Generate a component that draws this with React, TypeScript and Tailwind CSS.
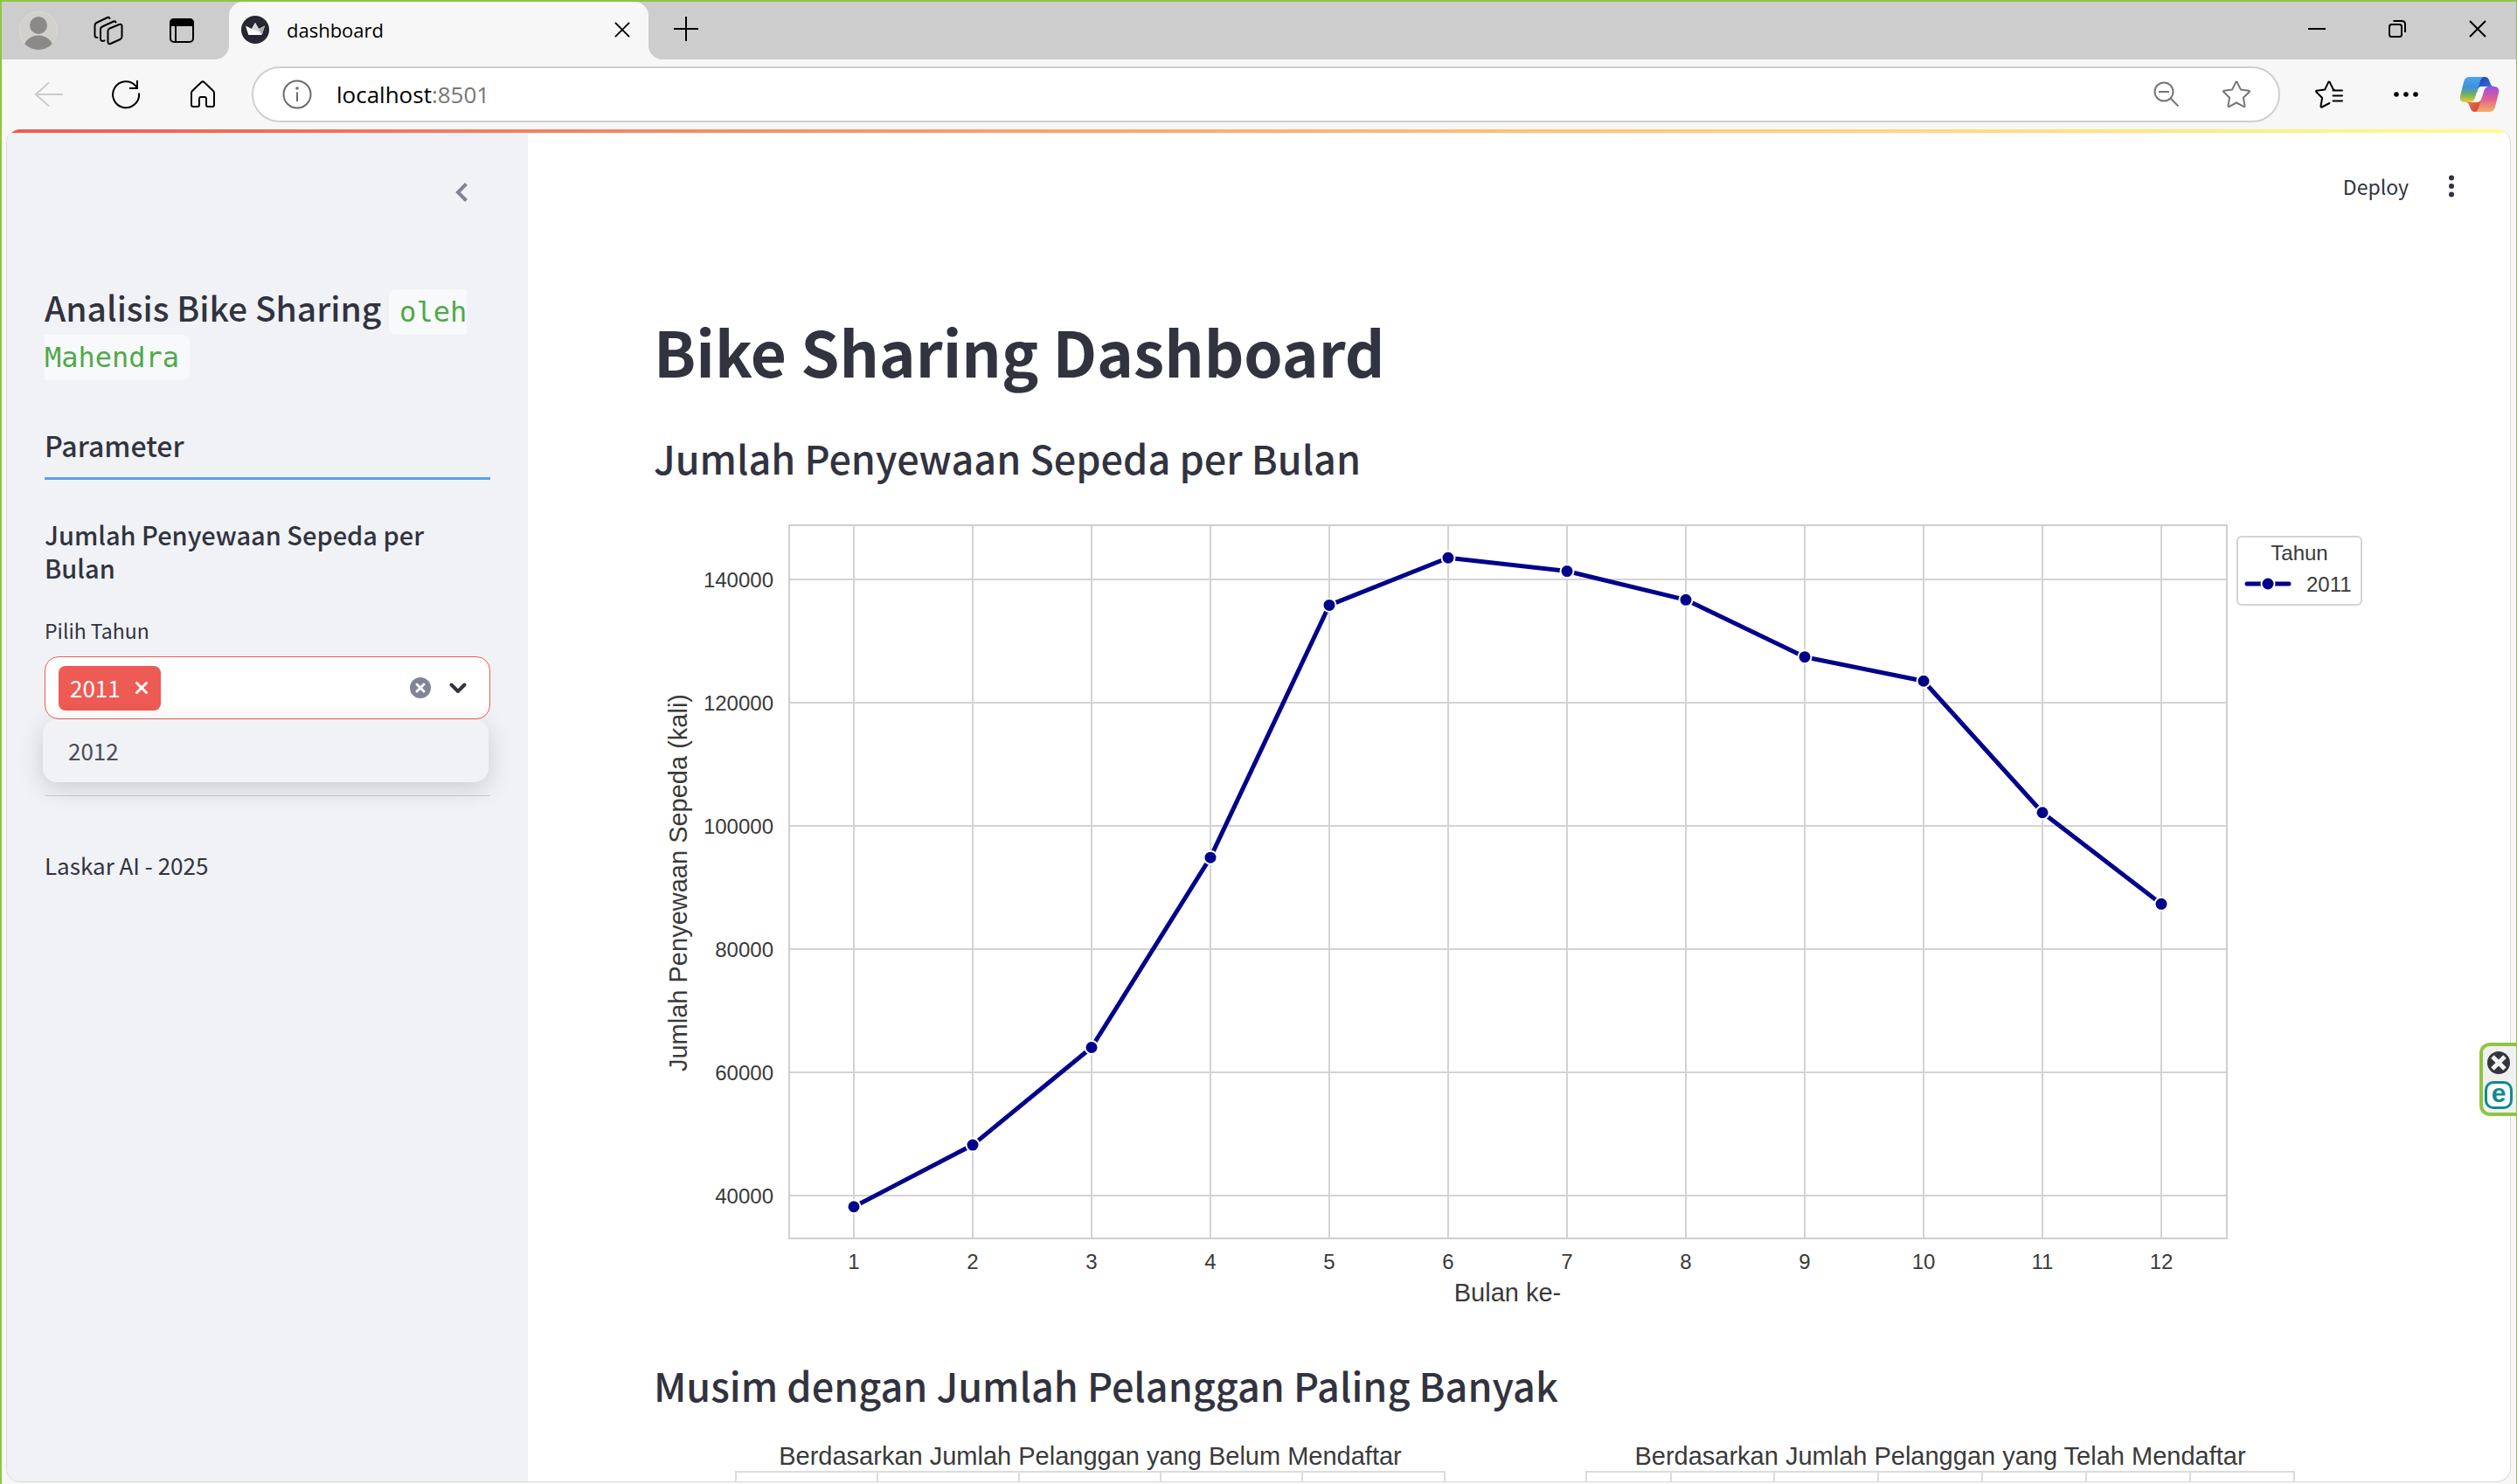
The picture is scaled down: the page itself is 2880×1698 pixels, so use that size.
const rentals = [38189, 48215, 64045, 94870, 135821, 143512, 141341, 136691, 127418, 123511, 102167, 87323];
const yTicks = [40000, 60000, 80000, 100000, 120000, 140000];

const monthX = (i: number) => 229 + i * 136;
const valueY = (v: number) => 778 - ((v - 40000) * 141) / 20000;

function MonthlyChart() {
  const points = rentals.map((v, i) => `${monthX(i)},${valueY(v)}`).join(" ");
  return (
    <svg viewBox="0 0 1980 915" role="img" aria-label="Jumlah Penyewaan Sepeda per Bulan" className="block h-auto w-full font-['Liberation_Sans',Arial,sans-serif]">
      <g stroke="#d3d3d3" strokeWidth="2" fill="none">
        {rentals.map((_, i) => (
          <line key={i} x1={monthX(i)} x2={monthX(i)} y1={11} y2={827} />
        ))}
        {yTicks.map((v) => (
          <line key={v} x1={155} x2={1800} y1={valueY(v)} y2={valueY(v)} />
        ))}
        <rect x="155" y="11" width="1645" height="816" stroke="#cfcfcf" />
      </g>
      <g fill="#3a3a3a" fontSize="24">
        {yTicks.map((v) => (
          <text key={v} x={137} y={valueY(v) + 9} textAnchor="end">{v}</text>
        ))}
        {rentals.map((_, i) => (
          <text key={i} x={monthX(i)} y={862} textAnchor="middle">{i + 1}</text>
        ))}
      </g>
      <g fill="#3a3a3a" fontSize="29" textAnchor="middle">
        <text x="977" y="899">Bulan ke-</text>
        <text x="38" y="420" transform="rotate(-90 38 420)">Jumlah Penyewaan Sepeda (kali)</text>
      </g>
      <polyline points={points} fill="none" stroke="#00008b" strokeWidth="5" strokeLinejoin="round" />
      <g fill="#00008b" stroke="#fff" strokeWidth="2">
        {rentals.map((v, i) => (
          <circle key={i} cx={monthX(i)} cy={valueY(v)} r="7.5" />
        ))}
      </g>
      <rect x="1812" y="24" width="142" height="78" rx="5" fill="#fff" stroke="#d3d3d3" strokeWidth="2" />
      <g fill="#3a3a3a" fontSize="24">
        <text x="1883" y="51" textAnchor="middle">Tahun</text>
        <text x="1891" y="87">2011</text>
      </g>
      <line x1="1823" x2="1871" y1="78" y2="78" stroke="#00008b" strokeWidth="5" strokeLinecap="round" />
      <circle cx="1847" cy="78" r="7.5" fill="#00008b" stroke="#fff" strokeWidth="2" />
    </svg>
  );
}

const seasonPanels = [
  { title: "Berdasarkan Jumlah Pelanggan yang Belum Mendaftar", left: 94, right: 905, lines: [256, 418, 580, 742] },
  { title: "Berdasarkan Jumlah Pelanggan yang Telah Mendaftar", left: 1067, right: 1877, lines: [1164, 1282, 1401, 1520, 1639, 1758] },
];

function SeasonCharts() {
  return (
    <svg viewBox="0 0 1980 600" role="img" aria-label="Musim dengan Jumlah Pelanggan Paling Banyak" className="block h-auto w-full font-['Liberation_Sans',Arial,sans-serif]">
      {seasonPanels.map((p) => (
        <g key={p.title}>
          <g stroke="#dcdcdc" strokeWidth="2" fill="none">
            {p.lines.map((x) => (
              <line key={x} x1={x} x2={x} y1={44} y2={520} />
            ))}
            <rect x={p.left} y={44} width={p.right - p.left} height={476} />
          </g>
          <text x={(p.left + p.right) / 2} y={36} textAnchor="middle" fontSize="29" fill="#3a3a3a">{p.title}</text>
        </g>
      ))}
    </svg>
  );
}

const AvatarIcon = () => (
  <svg width="44" height="44" viewBox="0 0 44 44">
    <defs>
      <clipPath id="avatar"><circle cx="22" cy="22" r="22" /></clipPath>
    </defs>
    <circle cx="22" cy="22" r="21.5" fill="#d2d0cc" stroke="#dedbd0" />
    <g clipPath="url(#avatar)" fill="#8b8a88">
      <circle cx="22" cy="16" r="10" />
      <ellipse cx="22" cy="43" rx="17" ry="15.5" />
    </g>
  </svg>
);

const WorkspacesIcon = () => (
  <svg width="34" height="34" viewBox="0 0 34 34" fill="none" stroke="#000" strokeWidth="2" strokeLinecap="round" strokeLinejoin="round">
    <path d="M16.500 17.500q0-2 2-3L29.500 10q3-1 3 2v12q0 2-2 3L19.500 32q-3 1-3-2Z" />
    <path d="M12.500 28.500c-3 1-4.500 0-4.500-2V15.500q0-2 2-3L23 6.500q2-.5 2.500 1" />
    <path d="M4.500 25C2.500 25 1.500 24.500 1.500 22.500V11q0-2 2-3L16 2q2-.5 2.500 1" />
  </svg>
);

const TabMenuIcon = () => (
  <svg width="30" height="30" viewBox="0 0 30 30" fill="none" stroke="#000" strokeWidth="2">
    <rect x="2" y="2" width="26" height="26" rx="4" />
    <path d="M2 9V6a4 4 0 0 1 4-4h18a4 4 0 0 1 4 4v3Z" fill="#000" />
    <path d="M8 9v19" />
  </svg>
);

const Favicon = () => (
  <svg width="32" height="32" viewBox="0 0 32 32">
    <circle cx="16" cy="16" r="16" fill="#262730" />
    <path d="M5 11.500 12 15l4-7 4 7 7-3.500-3.300 10.500H8.300Z" fill="#fff" />
    <path d="m16 8 4 7 7-3.500L23.700 22Z" fill="#a9a9ad" />
    <path d="m16 8 4 7 1.500 4L12 15Z" fill="#d4d4d8" />
  </svg>
);

const CloseIcon = ({ size = 20 }: { size?: number }) => (
  <svg width={size} height={size} viewBox="0 0 20 20" stroke="#000" strokeWidth="2"><path d="m1 1 18 18M19 1 1 19" /></svg>
);

const StarIcon = () => (
  <svg width="34" height="34" viewBox="0 0 34 34" fill="none" stroke="#767676" strokeWidth="2" strokeLinejoin="round">
    <path d="M16.200 3.100q.8-1.400 1.600 0l4 8.300 9.300 1.400q1.500.3.500 1.500l-6.700 6.400 1.600 9.200q.1 1.600-1.300 1L17 26.500l-8.200 4.400q-1.400.6-1.300-1l1.600-9.200-6.700-6.400q-1-1.200.5-1.500l9.300-1.400Z" />
  </svg>
);

const FavoritesIcon = () => (
  <svg width="34" height="34" viewBox="0 0 34 34" fill="none" stroke="#000" strokeWidth="2" strokeLinejoin="round" strokeLinecap="round">
    <path d="M17.500 27 8.800 31.500q-1.400.6-1.300-1l1.600-9.500-6.700-6.700q-1-1.200.5-1.500l9.300-1.400 4-8.300q.8-1.400 1.600 0l4 8.300 1 .4M21.500 12.500H32M21.500 18.500H32M21.500 24.500H32" />
  </svg>
);

const CopilotIcon = () => (
  <svg width="46" height="42" viewBox="0 0 46 42">
    <defs>
      <linearGradient id="cp-left" x1="0" y1="0" x2="0" y2="1">
        <stop offset="0" stopColor="#49a8ee" /><stop offset=".4" stopColor="#3f8fdc" /><stop offset=".7" stopColor="#6db35c" /><stop offset="1" stopColor="#f5c842" />
      </linearGradient>
      <linearGradient id="cp-right" x1="0" y1="0" x2="0" y2="1">
        <stop offset="0" stopColor="#9a50e2" /><stop offset=".5" stopColor="#e0608f" /><stop offset="1" stopColor="#f2b264" />
      </linearGradient>
      <linearGradient id="cp-top" x1="0" y1="0" x2="1" y2="1">
        <stop offset="0" stopColor="#1f36b8" /><stop offset="1" stopColor="#3a8de0" />
      </linearGradient>
      <linearGradient id="cp-bottom" x1="0" y1="0" x2="1" y2="1">
        <stop offset="0" stopColor="#f08a4c" /><stop offset="1" stopColor="#c83c35" />
      </linearGradient>
    </defs>
    <path d="M20 1h9c4 0 5 3 6 6s2 5 5 5H28L20 20Z" fill="url(#cp-top)" />
    <path d="M26 41h-8c-4 0-5-3-6-6s-2-5-5-5h12l8-8Z" fill="url(#cp-bottom)" />
    <path d="M12 1h17c-3 0-4 2-5 5l-6 19c-1 3-3 5-6 5H6c-4 0-6-3-5-7L5 7c1-4 3-6 7-6Z" fill="url(#cp-left)" />
    <path d="M34 41H17c3 0 4-2 5-5l6-19c1-3 3-5 6-5h6c4 0 6 3 5 7l-4 16c-1 4-3 6-7 6Z" fill="url(#cp-right)" />
    <path d="M26 12h7c-3 0-4 2-5 5l-2 7c-1 4-3 6-6 6h-6c2-1 3-2 4-5l3-9c1-3 2-4 4-4Z" fill="#f7f7f7" />
  </svg>
);

function TabStrip() {
  return (
    <header className="flex h-[66px] shrink-0 bg-[#f7f7f7]">
      <div className="flex w-[260px] items-center rounded-br-2xl bg-[#cdcdcd]">
        <button aria-label="Profil" className="flex w-[84px] justify-center"><AvatarIcon /></button>
        <button aria-label="Ruang kerja" className="flex w-[76px] justify-center"><WorkspacesIcon /></button>
        <button aria-label="Menu tab" className="flex w-[92px] justify-center"><TabMenuIcon /></button>
      </div>
      <div className="w-[480px] bg-[linear-gradient(#cdcdcd_50%,#f7f7f7_50%)]">
        <div className="flex h-16 items-center gap-5 rounded-t-2xl bg-[#f7f7f7] px-3.5">
          <Favicon />
          <span className="flex-1 text-[22px] leading-8 text-black">dashboard</span>
          <button aria-label="Tutup tab" className="flex size-8 items-center justify-center"><CloseIcon size={18} /></button>
        </div>
      </div>
      <div className="flex flex-1 items-center rounded-bl-2xl bg-[#cdcdcd]">
        <button aria-label="Tab baru" className="flex w-[86px] justify-center pb-1">
          <svg width="28" height="28" viewBox="0 0 28 28" stroke="#000" strokeWidth="2"><path d="M14 0v28M0 14h28" /></svg>
        </button>
        <div className="flex-1" />
        <button aria-label="Perkecil" className="flex w-[92px] justify-center pr-1 pb-1">
          <svg width="20" height="20" viewBox="0 0 20 20" stroke="#000" strokeWidth="2"><path d="M0 10h20" /></svg>
        </button>
        <button aria-label="Pulihkan" className="flex w-[92px] justify-center pr-1 pb-1">
          <svg width="20" height="20" viewBox="0 0 20 20" fill="none" stroke="#000" strokeWidth="2"><rect x="1" y="5" width="14" height="14" rx="2.500" /><path d="M5.500 1H15q4 0 4 4v9" /></svg>
        </button>
        <button aria-label="Tutup" className="flex w-[88px] justify-center pb-1"><CloseIcon /></button>
      </div>
    </header>
  );
}

function Toolbar() {
  return (
    <nav className="flex h-20 shrink-0 items-center bg-[#f7f7f7] pr-0.5 pl-2.5">
      <button aria-label="Kembali" className="flex w-[88px] justify-center">
        <svg width="32" height="28" viewBox="0 0 32 28" fill="none" stroke="#cbcbcb" strokeWidth="2"><path d="M32 14H1M16 .5 1 14l15 13.500" /></svg>
      </button>
      <button aria-label="Muat ulang" className="flex w-[88px] justify-center">
        <svg width="34" height="34" viewBox="0 0 34 34" fill="none" stroke="#000" strokeWidth="2"><path d="M32 15.500A15 15 0 1 1 28.500 7.500l1 1.500M30 1v9h-9" /></svg>
      </button>
      <button aria-label="Beranda" className="flex w-[88px] justify-center">
        <svg width="30" height="32" viewBox="0 0 30 32" fill="none" stroke="#000" strokeWidth="2" strokeLinejoin="round"><path d="M2 14.500q0-1.500 1-2.500L13.500 2q1.500-1.300 3 0L27 12q1 1 1 2.500V28q0 2-2 2h-5q-2 0-2-2v-7q0-2-2-2h-4q-2 0-2 2v7q0 2-2 2H4q-2 0-2-2Z" /></svg>
      </button>
      <div className="ml-3 flex h-16 flex-1 items-center rounded-full border-2 border-[#cfcfcf] bg-white pr-[31px] pl-[33px]">
        <button aria-label="Info situs" className="mr-7">
          <svg width="34" height="34" viewBox="0 0 34 34" fill="none" stroke="#6b6b6b" strokeWidth="2"><circle cx="17" cy="17" r="15.500" /><path d="M17 14.500V25" /><circle cx="17" cy="10" r=".8" fill="#6b6b6b" /></svg>
        </button>
        <div role="textbox" aria-label="Bilah alamat" className="flex-1 text-[26px] leading-9 text-black">localhost<span className="text-[#767676]">:8501</span></div>
        <button aria-label="Zoom" className="mr-12">
          <svg width="30" height="30" viewBox="0 0 30 30" fill="none" stroke="#767676" strokeWidth="2"><circle cx="12" cy="12" r="10.500" /><path d="m19.500 19.500 9 9M6 12h12" /></svg>
        </button>
        <button aria-label="Tambah favorit"><StarIcon /></button>
      </div>
      <button aria-label="Favorit" className="ml-3 flex w-[88px] justify-center"><FavoritesIcon /></button>
      <button aria-label="Setelan" className="flex w-[88px] justify-center">
        <svg width="28" height="6" viewBox="0 0 28 6"><circle cx="3" cy="3" r="2.800" /><circle cx="14" cy="3" r="2.800" /><circle cx="25" cy="3" r="2.800" /></svg>
      </button>
      <button aria-label="Copilot" className="flex w-20 justify-center"><CopilotIcon /></button>
    </nav>
  );
}

function YearSelect() {
  return (
    <div>
      <label htmlFor="year" className="block text-[23px] leading-8">Pilih Tahun</label>
      <div className="relative mt-3.5">
        <div className="flex h-[72px] items-center rounded-2xl border border-[#ee5a54] bg-white pr-6 pl-[15px] text-[26px] leading-[46px]">
          <span className="flex h-[51px] items-center gap-4 rounded-lg bg-[#ee5a54] pr-3.5 pl-[13px] text-white">
            2011
            <button aria-label="Hapus 2011">
              <svg width="16" height="16" viewBox="0 0 16 16" stroke="#fff" strokeWidth="3" strokeLinecap="round"><path d="m2.500 2.500 11 11M13.500 2.500l-11 11" /></svg>
            </button>
          </span>
          <input id="year" role="combobox" aria-expanded="true" aria-controls="year-list" className="min-w-0 flex-1 bg-transparent outline-none" />
          <button aria-label="Hapus semua" className="mr-[19px]">
            <svg width="24" height="24" viewBox="0 0 24 24"><circle cx="12" cy="12" r="12" fill="#808495" /><path d="m8 8 8 8M16 8l-8 8" stroke="#fff" strokeWidth="3" strokeLinecap="round" /></svg>
          </button>
          <button aria-label="Buka pilihan">
            <svg width="24" height="24" viewBox="0 0 24 24" fill="none" stroke="#31333f" strokeWidth="4" strokeLinecap="round" strokeLinejoin="round"><path d="m4.500 8.500 7.500 7.500 7.500-7.500" /></svg>
          </button>
        </div>
        <ul id="year-list" role="listbox" className="absolute top-full right-0.5 -left-0.5 rounded-2xl bg-[#f0f2f6] shadow-[0_7px_29px_rgba(0,0,0,0.16)]">
          <li role="option" aria-selected="false" className="px-[29px] py-[13px] text-[26px] leading-[46px] text-[#4a4c57]">2012</li>
        </ul>
      </div>
    </div>
  );
}

function Sidebar() {
  return (
    <aside className="w-[596px] shrink-0 bg-[#f0f2f6] px-[43px]">
      <div className="flex h-[136px] items-center justify-end pr-[21px]">
        <button aria-label="Tutup sidebar" className="p-1">
          <svg width="16" height="22" viewBox="0 0 16 22" fill="none" stroke="#808495" strokeWidth="4"><path d="M13.500 1.500 4 11l9.500 9.500" /></svg>
        </button>
      </div>
      <h2 className="mt-[37px] text-[39px] leading-[52px] font-medium">
        Analisis Bike Sharing{" "}
        <code className="rounded-lg bg-[#f8f9fb] px-3 py-[7px] font-['DejaVu_Sans_Mono',monospace] text-[32px] leading-none font-normal text-[#4fa94a]">oleh Mahendra</code>
      </h2>
      <h3 className="mt-[58px] text-[32px] leading-[44px] font-medium">Parameter</h3>
      <hr className="mt-[15px] border-t-[3px] border-[#5b9fee]" />
      <h4 className="mt-[43px] mb-[37px] text-[29px] leading-[38px] font-medium">Jumlah Penyewaan Sepeda per Bulan</h4>
      <YearSelect />
      <hr className="mt-[87px] border-t border-[#c9cbd1]" />
      <p className="mt-14 text-[26px] leading-[46px]">Laskar AI - 2025</p>
    </aside>
  );
}

export default function App() {
  return (
    <div className="relative flex h-screen flex-col overflow-hidden border-t-2 border-r border-l-2 border-[#8dc63f] bg-[#f7f7f7] font-['Open_Sans',sans-serif]">
      <TabStrip />
      <Toolbar />
      <div className="mr-1.5 mb-0.5 ml-[5px] flex min-h-0 flex-1 flex-col overflow-hidden rounded-2xl border-x border-b border-[#d9d9d9] bg-white font-['Noto_Sans_CJK_SC',sans-serif] text-[#31333f]">
        <div className="h-1 shrink-0 bg-linear-to-r from-[#ee5a54] to-[#fffd8b]" />
        <div className="flex min-h-0 flex-1">
          <Sidebar />
          <main className="min-w-0 flex-1 px-36">
            <div className="flex h-[121px] items-center justify-end gap-10 text-[23px] leading-8">
              <button className="ml-auto">Deploy</button>
              <button aria-label="Menu utama" className="-mr-[86px] px-1.5">
                <svg width="6" height="26" viewBox="0 0 6 26" fill="#31333f"><circle cx="3" cy="3.500" r="3" /><circle cx="3" cy="13" r="3" /><circle cx="3" cy="22.500" r="3" /></svg>
              </button>
            </div>
            <h1 className="mt-[81px] text-[71px] leading-[95px] font-bold">Bike Sharing Dashboard</h1>
            <h2 className="mt-[45px] mb-9 text-[45px] leading-[60px] font-medium">Jumlah Penyewaan Sepeda per Bulan</h2>
            <MonthlyChart />
            <h2 className="mt-[50px] mb-[25px] text-[45px] leading-[60px] font-medium">Musim dengan Jumlah Pelanggan Paling Banyak</h2>
            <SeasonCharts />
          </main>
        </div>
      </div>
      <div className="absolute top-[1191px] right-0 flex w-[42px] flex-col items-center gap-2 rounded-l-xl border-4 border-r-0 border-[#8dc63f] bg-[#f0f0f0] pt-1.5 pr-0.5 pb-1">
        <button aria-label="Tutup panel">
          <svg width="26" height="26" viewBox="0 0 26 26" className="block"><circle cx="13" cy="13" r="13" fill="#33363d" /><path d="m6 6 14 14M20 6 6 20" stroke="#f4f4f4" strokeWidth="5" /></svg>
        </button>
        <button aria-label="Panel keamanan" className="flex size-8 items-center justify-center rounded-[10px] border-[3px] border-[#0e8a92] bg-white pb-1 font-['Liberation_Sans',sans-serif] text-[30px] leading-6 font-bold text-[#0e8a92]">e</button>
      </div>
    </div>
  );
}
